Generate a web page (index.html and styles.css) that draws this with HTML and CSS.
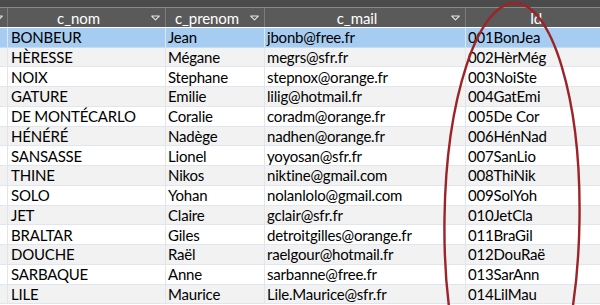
FILE: index.html
```html
<!DOCTYPE html>
<html lang="fr">
<head>
<meta charset="utf-8">
<title>Table</title>
<link rel="stylesheet" href="styles.css">
</head>
<body>
<div class="sheet">
  <div class="topstrip"></div>
  <div class="grid">
    <div class="hcell stub"><svg class="arrow" viewBox="0 0 10 6"><polygon points="0.8,0.8 9.2,0.8 5,5.2"/></svg></div>
    <div class="hcell"><span>c_nom</span><svg class="arrow" viewBox="0 0 10 6"><polygon points="0.8,0.8 9.2,0.8 5,5.2"/></svg></div>
    <div class="hcell"><span>c_prenom</span><svg class="arrow" viewBox="0 0 10 6"><polygon points="0.8,0.8 9.2,0.8 5,5.2"/></svg></div>
    <div class="hcell"><span>c_mail</span><svg class="arrow" viewBox="0 0 10 6"><polygon points="0.8,0.8 9.2,0.8 5,5.2"/></svg></div>
    <div class="hcell id"><span>Id</span></div>

    <div class="row sel"><div class="c stub"></div><div class="c">BONBEUR</div><div class="c">Jean</div><div class="c">jbonb@free.fr</div><div class="c">001BonJea</div></div>
    <div class="row alt"><div class="c stub"></div><div class="c">HÈRESSE</div><div class="c">Mégane</div><div class="c">megrs@sfr.fr</div><div class="c">002HèrMég</div></div>
    <div class="row"><div class="c stub"></div><div class="c">NOIX</div><div class="c">Stephane</div><div class="c">stepnox@orange.fr</div><div class="c">003NoiSte</div></div>
    <div class="row alt"><div class="c stub"></div><div class="c">GATURE</div><div class="c">Emilie</div><div class="c">lilig@hotmail.fr</div><div class="c">004GatEmi</div></div>
    <div class="row"><div class="c stub"></div><div class="c">DE MONTÉCARLO</div><div class="c">Coralie</div><div class="c">coradm@orange.fr</div><div class="c">005De Cor</div></div>
    <div class="row alt"><div class="c stub"></div><div class="c">HÉNÉRÉ</div><div class="c">Nadège</div><div class="c">nadhen@orange.fr</div><div class="c">006HénNad</div></div>
    <div class="row"><div class="c stub"></div><div class="c">SANSASSE</div><div class="c">Lionel</div><div class="c">yoyosan@sfr.fr</div><div class="c">007SanLio</div></div>
    <div class="row alt"><div class="c stub"></div><div class="c">THINE</div><div class="c">Nikos</div><div class="c">niktine@gmail.com</div><div class="c">008ThiNik</div></div>
    <div class="row"><div class="c stub"></div><div class="c">SOLO</div><div class="c">Yohan</div><div class="c">nolanlolo@gmail.com</div><div class="c">009SolYoh</div></div>
    <div class="row alt"><div class="c stub"></div><div class="c">JET</div><div class="c">Claire</div><div class="c">gclair@sfr.fr</div><div class="c">010JetCla</div></div>
    <div class="row"><div class="c stub"></div><div class="c">BRALTAR</div><div class="c">Giles</div><div class="c">detroitgilles@orange.fr</div><div class="c">011BraGil</div></div>
    <div class="row alt"><div class="c stub"></div><div class="c">DOUCHE</div><div class="c">Raël</div><div class="c">raelgour@hotmail.fr</div><div class="c">012DouRaë</div></div>
    <div class="row"><div class="c stub"></div><div class="c">SARBAQUE</div><div class="c">Anne</div><div class="c">sarbanne@free.fr</div><div class="c">013SarAnn</div></div>
    <div class="row alt"><div class="c stub"></div><div class="c">LILE</div><div class="c">Maurice</div><div class="c">Lile.Maurice@sfr.fr</div><div class="c">014LilMau</div></div>
  </div>
  <svg class="ring" viewBox="0 0 600 305" width="600" height="305">
    <ellipse cx="512" cy="219" rx="67.5" ry="216" transform="rotate(0.8 512 219)"/>
  </svg>
</div>
</body>
</html>
```
FILE: styles.css
```css
html, body {
  margin: 0;
  padding: 0;
  background: #ffffff;
}
.sheet {
  position: relative;
  width: 600px;
  height: 305px;
  overflow: hidden;
  font-family: "Lato", "Liberation Sans", sans-serif;
  font-size: 15px;
  color: #000;
}
.topstrip {
  height: 7px;
  background: #4b4b4b;
  border-bottom: 1px solid #8a8a8a;
}
.grid {
  display: grid;
  grid-template-columns: 8px 158px 99px 201px 140px;
  grid-auto-rows: 19.75px;
}
.hcell {
  background: #5a5a5a;
  color: #ffffff;
  display: flex;
  align-items: center;
  justify-content: center;
  position: relative;
  border-right: 1px solid #7c7c7c;
  padding-right: 16px;
  font-size: 15px;
  letter-spacing: -0.1px;
  height: 19px;
  box-sizing: border-box;
}
.hcell.stub {
  padding-right: 0;
  overflow: hidden;
}
.hcell.id {
  padding-right: 0;
  border-right: none;
}
.hcell.stub .arrow {
  right: 4px;
}
.arrow {
  position: absolute;
  right: 5px;
  top: 7px;
  width: 9px;
  height: 6px;
}
.arrow polygon {
  fill: #5a5a5a;
  stroke: #e6e6e6;
  stroke-width: 1.2;
  stroke-linejoin: round;
}
.row {
  display: contents;
}
.c {
  background: #ffffff;
  border-bottom: 1px solid #e1e5ee;
  border-right: 1px solid #e1e5ee;
  box-sizing: border-box;
  padding: 0 2px 0 2px;
  display: flex;
  align-items: center;
  white-space: nowrap;
  overflow: hidden;
  letter-spacing: -0.2px;
}
.row .c:nth-child(2) {
  padding-left: 3px;
}
.row.alt .c {
  background: #f2f2f2;
}
.row.sel .c {
  background: #a6cdf1;
  border-bottom-color: #c6dcf2;
}
.c.stub {
  padding: 0;
}
.ring {
  position: absolute;
  left: 0;
  top: 0;
  pointer-events: none;
}
.ring ellipse {
  fill: none;
  stroke: #9c2428;
  stroke-width: 2.4;
}
```
